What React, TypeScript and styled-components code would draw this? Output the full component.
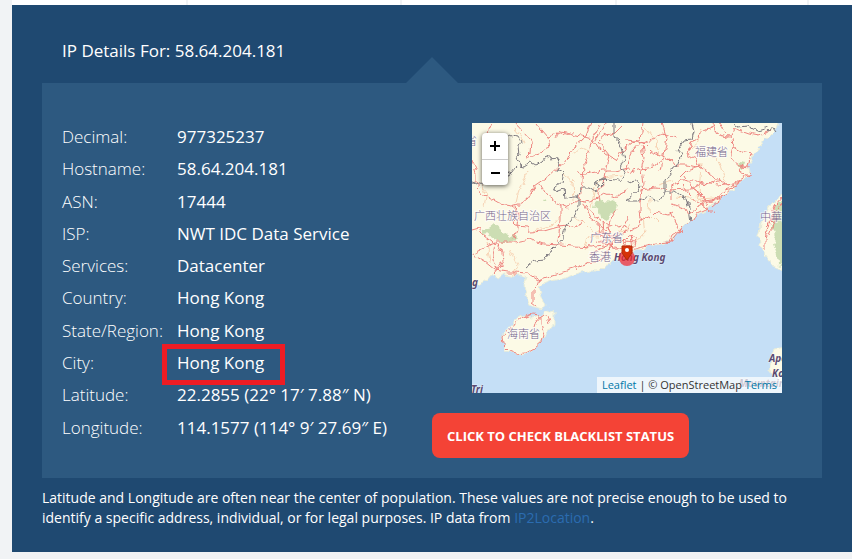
import React from "react";
import styled, { createGlobalStyle } from "styled-components";

const Global = createGlobalStyle`
  * { box-sizing: border-box; }
  body { margin: 0; background: #f1f3f5; font-family: "Open Sans", sans-serif; color: #fff; }
`;

const Page = styled.div`
  padding-left: 12px;
`;

const Tabs = styled.div`
  display: grid;
  grid-template-columns: 176px 214px 215px 192px 1fr;
  height: 5px;
  background: #fff;
`;

const Tab = styled.span`
  border-right: 2px solid #f1f3f5;
  &:last-child { border-right: 0; }
`;

const Card = styled.main`
  background: #1f4971;
  padding: 30px;
  padding-bottom: 24px;
`;

const Title = styled.h1`
  margin: 0;
  padding: 0 20px;
  font-size: 17px;
  font-weight: 400;
  line-height: 32px;
`;

const Panel = styled.section`
  position: relative;
  display: grid;
  grid-template-columns: 1fr 1fr;
  margin-top: 16px;
  padding: 40px 0 20px;
  background: #2d5980;
`;

const Arrow = styled.span`
  position: absolute;
  bottom: 100%;
  left: 50%;
  margin-left: -26px;
  border: 26px solid transparent;
  border-top: 0;
  border-bottom-color: #2d5980;
`;

const Details = styled.table`
  margin-left: 20px;
  height: 323px;
  border-collapse: collapse;
  font-size: 17px;
  line-height: 28px;
`;

const Label = styled.th`
  width: 115px;
  padding: 0;
  font-weight: 300;
  text-align: left;
  vertical-align: top;
  white-space: nowrap;
`;

const Value = styled.td`
  padding: 0;
  vertical-align: top;
  white-space: nowrap;
`;

const Marked = styled.span`
  position: relative;
  &::after {
    content: "";
    position: absolute;
    inset: -7px -21px -11px -15px;
    border: 5px solid #ed1c24;
  }
`;

const Side = styled.div`
  display: flex;
  flex-direction: column;
  align-items: flex-start;
  gap: 20px;
`;

const MapBox = styled.div`
  position: relative;
  align-self: stretch;
  height: 270px;
  margin: 0 40px;
  overflow: hidden;
  background: #c5dff6;
  > svg { display: block; }
`;

const ZoomControls = styled.div`
  position: absolute;
  top: 10px;
  left: 10px;
  width: 26px;
  border-radius: 4px;
  background: #fff;
  box-shadow: 0 1px 5px rgba(0, 0, 0, 0.65);
`;

const ZoomButton = styled.button`
  display: flex;
  align-items: center;
  justify-content: center;
  width: 26px;
  height: 26px;
  padding: 0;
  border: 0;
  background: none;
  color: #000;
  & + & { border-top: 1px solid #ccc; }
`;

const Attribution = styled.div`
  position: absolute;
  right: 0;
  bottom: 0;
  padding: 0 5px;
  background: rgba(255, 255, 255, 0.7);
  color: #333;
  font-size: 11px;
  line-height: 16px;
  white-space: nowrap;
  a { color: #0078a8; text-decoration: none; }
`;

const BlacklistButton = styled.button`
  height: 45px;
  padding: 0 15px;
  border: 0;
  border-radius: 8px;
  background: #f44336;
  color: #fff;
  font: 700 13px "Open Sans", sans-serif;
  white-space: nowrap;
`;

const Note = styled.p`
  margin: 10px 0 0;
  font-size: 14px;
  line-height: 20px;
  a { color: #2b6cb0; text-decoration: none; }
`;

const details = [
  ["Decimal:", "977325237"],
  ["Hostname:", "58.64.204.181"],
  ["ASN:", "17444"],
  ["ISP:", "NWT IDC Data Service"],
  ["Services:", "Datacenter"],
  ["Country:", "Hong Kong"],
  ["State/Region:", "Hong Kong"],
  ["City:", "Hong Kong"],
  ["Latitude:", "22.2855 (22° 17′ 7.88″ N)"],
  ["Longitude:", "114.1577 (114° 9′ 27.69″ E)"],
];

const Province = styled.text`
  font: 300 11px "Noto Sans CJK SC", sans-serif;
  fill: #75658c;
  stroke: #fff;
  stroke-width: 2px;
  stroke-opacity: 0.6;
  paint-order: stroke;
`;

const Place = styled.text`
  font: italic 700 10px "Noto Sans", sans-serif;
  fill: #5a4a72;
  stroke: #fff;
  stroke-width: 1px;
  stroke-opacity: 0.5;
  paint-order: stroke;
`;

const Coastline = () => (
  <g fill="#fcfae6" stroke="#e9edd9" strokeWidth="1">
    <path d="M-5 -5H307L303 8 297 14 292 18 287 25 290 27 281 30 280 37 276 42 278 50 274 55 265 60 260 68 253 71 248 77 239 81 233 88 225 92 219 98 213 102 208 107 202 113 193 121 184 123 177 121 172 127 165 126 159 129 153 132 150 137 144 136 139 141 132 143 127 148 119 148 110 149 101 152 90 156 79 158 71 161 66 166 69 174 72 181 70 186 63 184 57 181 54 173 52 163 55 155 51 153 43 153 32 151 27 155 20 151 14 158 8 161 -5 164Z" />
    <path d="M60 194 72 191 76 186 82 189 82 200 75 210 72 215 68 221 60 227 53 232 43 231 34 228 30 218 30 210 38 204 43 196 52 192Z" />
    <path d="M315 67 303 77 297 84 293 92 289 101 286 112 287 122 292 129 293 134 296 132 298 137 300 142 306 145 315 148Z" />
    <path d="M315 224 303 226 300 234 297 247 301 253 307 257 315 275Z" />
  </g>
);

const Greenery = () => (
  <g fill="#c4d9ab" opacity="0.85">
    <path d="M122 81 128 76 134 79 141 76 146 83 143 90 137 92 135 97 129 94 127 87 121 85Z" />
    <path d="M16 106 22 101 27 105 32 110 38 114 43 111 46 115 42 118 33 120 25 118 19 114Z" />
    <path d="M11 107l6-2 1 6-6 1zM266 38l7 1-2 7-6-3zM72 75l2 2-3 1z" />
    <path d="M315 72 304 82 300 94 300 104 304 114 301 121 305 132 306 142 315 145Z" />
  </g>
);

const minorRoads =
  "M56 47 52 57 47 67 44 80 M43 6 48 12 52 20 M101 31l8-7 8 3 M7 60l8 10-3 12 M90 92l-8 9-20 7 M100 94l10 5 9 9 12 2 8 8 M92 51l9 8 1 18 M150 52l-18 2-9 10-4 21 M145 107l9 2 4-8 M236 27l12 13 6 19 M229 5l-4 14-6 8 M173 4l10 13 5 15 M229 40l-2 31 3 13 M112 126l5-13 10 1 M40 153l6-11-8-16 M18 139l-3-20 M178 76l-1 13 9 9 M203 73l21 3 20-1 M156 128l17-18-2-16 M186 62l15-4";

const roads =
  "M19 0 15 9 21 17 20 24 12 31 M0 37 4 50 4 59 9 70 16 74 28 81 40 83 50 80 57 74 63 63 76 54 88 43 97 35 101 23 114 13 119 0 M43 0 52 10 59 18 58 29 52 35 M64 0 76 14 86 11 97 10 120 16 128 0 M76 14 78 25 65 31 53 35 M97 10 88 8 84 15 M120 16 125 24 134 31 144 37 155 22 M120 16 117 29 112 41 111 59 108 75 114 83 122 92 130 98 137 103 M135 0 131 8 124 14 120 21 M150 3 143 10 134 12 128 17 M126 18 137 32 134 45 131 60 126 70 127 78 M68 61 74 71 85 80 96 85 107 77 118 79 132 70 143 74 156 67 M44 83 47 93 46 104 42 115 M42 82 45 92 40 99 44 103 55 104 59 109 72 108 86 104 M88 81 88 98 86 119 M86 104 97 103 105 105 110 97 M24 119 42 119 58 116 71 121 88 122 101 123 120 124 131 122 M0 131 10 126 17 122 24 120 30 130 31 138 27 145 22 151 M0 107 7 105 12 112 20 118 24 123 M23 121 21 132 23 141 27 148 M3 133 12 138 23 147 36 149 43 149 55 150 66 157 74 154 88 150 101 146 118 139 128 139 138 128 M43 149 43 153 M61 152 68 156 66 162 61 167 61 180 65 183 M102 143 105 148 M113 83 118 94 129 102 134 108 M105 49 113 51 129 48 143 48 157 45 M137 104 140 115 148 119 156 121 M145 86 139 96 137 111 M156 94 149 107 139 115 M123 112 133 110 145 113 154 110 M130 97 131 108 131 119 M125 101 129 114 139 121 M126 118 137 122 151 125 M135 105 148 102 157 106 M118 132 128 126 139 121 146 129 M130 138 135 128 142 118";
const eastRoads =
  "M171 0 169 16 160 19 153 24 M170 18 161 28 156 39 153 48 M170 19 179 28 188 32 199 36 204 42 213 42 227 44 239 51 247 57 258 63 267 57 278 50 M153 17 163 18 171 20 182 14 191 10 204 15 M190 0 195 16 192 31 189 47 M170 22 172 35 169 47 171 61 168 80 M153 51 168 46 181 44 190 37 199 35 M207 55 214 48 228 44 225 36 215 31 221 17 232 8 243 3 M240 0 245 12 257 14 262 5 276 10 286 12 299 7 M248 0 254 10 M260 14 261 24 270 29 279 31 276 43 268 43 269 51 279 53 M261 24 258 36 266 42 278 44 M213 53 219 64 229 72 235 80 M199 77 199 64 209 58 220 57 236 61 249 57 M168 67 184 65 199 67 218 66 230 60 246 62 261 60 M235 82 229 72 220 65 M199 81 212 85 215 91 226 86 230 78 242 77 253 72 262 62 271 55 M245 74 252 73 246 78 240 83 M231 80 241 78 253 67 265 63 267 57 M214 102 221 97 224 91 236 85 M153 110 166 104 168 97 179 94 184 89 196 92 201 89 M168 75 168 89 170 98 M199 91 203 100 209 109 M210 104 202 114 197 120 183 121 170 124 156 128 M196 121 200 112 209 106 M156 127 151 119 157 113 165 115 163 123 154 124 M153 118 164 119 M158 112 160 126 M210 62l18 20 14 8";
const islandRoads = "M67 192 60 191 50 195 42 201 39 206 34 208 30 214 31 222 37 228 44 231 54 230 63 225 70 219 72 212 69 202 69 192 M69 192 64 198 62 205 M69 192 75 193 77 200 M310 74 304 81 300 91 297 104 293 116 293 127 M310 80 303 91 301 104 297 113 M306 79 300 86 301 97 294 104";
const borders =
  "M35 15 41 12 46 13 49 19 47 24 48 33 45 37 47 42 52 43 58 39 64 42 69 39 74 33 79 35 85 34 88 41 85 48 92 50 90 58 82 65 84 69 92 66 93 75 101 73 107 73 107 83 103 92 96 100 92 107 91 116 82 126 75 132 72 137 62 138 55 144 M0 60 10 63 16 58 29 54 38 50 44 43 M39 52l-7 2 6-4-5-3 M107 75 108 65 118 65 124 69 127 63 122 60 131 55 143 57 149 59 153 52 148 44 152 36 150 28 147 18 142 14 142 0 M127 64 135 56 127 57 M156 59 164 57 168 62 166 67 159 72 155 78 165 78 176 73 188 79 193 70 193 57 199 49 206 41 209 31 206 27 212 17 220 16 222 9 220 0 M193 69 204 69 214 76 217 85 219 99 M261 0 267 4 276 3 285 8 296 5 M296 8 302 4 305 8";

const MapDrawing = () => (
  <svg width="310" height="270" viewBox="0 0 310 270" role="img" aria-label="Map of Hong Kong">
    <defs>
      <filter id="terrain" filterUnits="userSpaceOnUse" x="-5" y="-5" width="320" height="280">
        <feTurbulence type="fractalNoise" baseFrequency="0.14" numOctaves="2" seed="4" result="noise" />
        <feDisplacementMap in="SourceGraphic" in2="noise" scale="7" xChannelSelector="R" yChannelSelector="G" />
      </filter>
    </defs>
    <g filter="url(#terrain)">
      <Coastline />
      <Greenery />
      <g fill="none" strokeLinejoin="round">
        <path d={minorRoads} stroke="#f7d3b4" strokeWidth="1" />
        <path d={roads} stroke="#ee8580" strokeWidth="1" />
        <path d={eastRoads} stroke="#ee8580" strokeWidth="1" />
        <path d={islandRoads} stroke="#ee8580" strokeWidth="1" />
        <path d={borders} stroke="#7d797f" strokeWidth="1" />
      </g>
    </g>
    <Province x="-6" y="22">省</Province>
    <Province x="2" y="97">广西壮族自治区</Province>
    <Province x="118" y="119">广东省</Province>
    <Province x="117" y="138">香港</Province>
    <Province x="223" y="33">福建省</Province>
    <Province x="35" y="215">海南省</Province>
    <Province x="288" y="98">中華民國</Province>
    <Place x="142" y="138">Hong Kong</Place>
    <Place x="0" y="163">g</Place>
    <Place x="-1" y="270">Tri</Place>
    <Place x="297" y="239">Apo</Place>
    <Place x="300" y="254">Kord</Place>
    <Place x="267" y="264">Mountain</Place>
    <circle cx="155" cy="135" r="8" fill="#f5242c" fillOpacity="0.7" />
    <path d="M150 123h10v7l-5 7-5-7z" fill="#d63208" stroke="#b02a08" strokeWidth="1" />
    <circle cx="155" cy="127" r="2" fill="#fff" />
  </svg>
);

export default function App() {
  return (
    <Page>
      <Global />
      <Tabs><Tab /><Tab /><Tab /><Tab /><Tab /></Tabs>
      <Card>
        <Title>IP Details For: 58.64.204.181</Title>
        <Panel>
          <Arrow />
          <Details>
            <tbody>
              {details.map(([label, value]) => (
                <tr key={label}>
                  <Label scope="row">{label}</Label>
                  <Value>{label === "City:" ? <Marked>{value}</Marked> : value}</Value>
                </tr>
              ))}
            </tbody>
          </Details>
          <Side>
            <MapBox>
              <MapDrawing />
              <ZoomControls>
                <ZoomButton aria-label="Zoom in">
                  <svg width="12" height="12" viewBox="0 0 12 12" stroke="#000" strokeWidth="2"><path d="M6 1v10M1 6h10" /></svg>
                </ZoomButton>
                <ZoomButton aria-label="Zoom out">
                  <svg width="12" height="12" viewBox="0 0 12 12" stroke="#000" strokeWidth="2"><path d="M2 6h9" /></svg>
                </ZoomButton>
              </ZoomControls>
              <Attribution>
                <a href="#leaflet">Leaflet</a> | © OpenStreetMap <a href="#terms">Terms</a>
              </Attribution>
            </MapBox>
            <BlacklistButton>CLICK TO CHECK BLACKLIST STATUS</BlacklistButton>
          </Side>
        </Panel>
        <Note>
          Latitude and Longitude are often near the center of population. These values are not precise enough to be used to
          identify a specific address, individual, or for legal purposes. IP data from <a href="#ip2location">IP2Location</a>.
        </Note>
      </Card>
    </Page>
  );
}
